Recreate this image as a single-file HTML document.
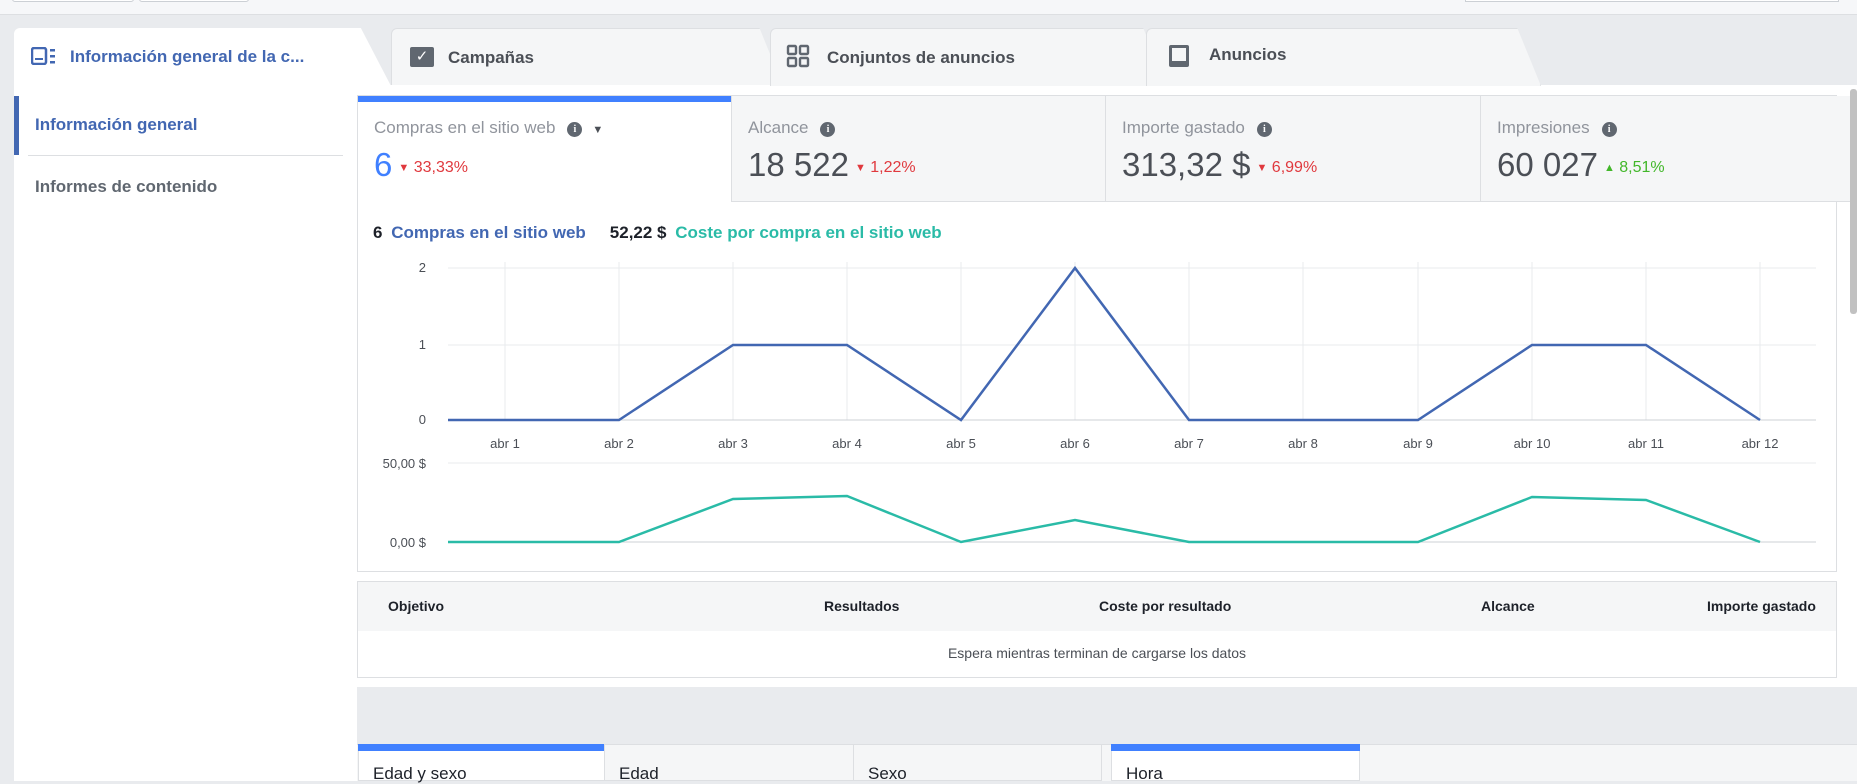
<!DOCTYPE html>
<html><head><meta charset="utf-8"><style>
*{margin:0;padding:0;box-sizing:border-box}
body{width:1857px;height:781px;overflow:hidden;background:#e9ebee;font-family:"Liberation Sans",Arial,sans-serif;position:relative;color:#4b4f56}
.a{position:absolute}
.tab{position:absolute;top:28px;height:58px;background:#f5f6f7;border:1px solid #dddfe2;border-bottom:none;border-radius:6px 6px 0 0;font-size:17px;font-weight:bold;color:#4b4f56;display:flex;align-items:center}
.card{position:absolute;top:96px;height:106px;background:#f5f6f7;border-left:1px solid #dddfe2;border-bottom:1px solid #dddfe2}
.lbl{position:absolute;left:16px;top:22px;font-size:17px;color:#90949c}
.val{position:absolute;left:16px;top:50px;font-size:33px;color:#4b4f56;white-space:nowrap}
.val small{font-size:16px;color:#e0393e;margin-left:6px;vertical-align:4px}
.val small.g{color:#42b72a}
.tri{font-size:11px;vertical-align:1px}
.info{display:inline-block;width:15px;height:15px;border-radius:50%;background:#606770;color:#fff;font-size:10px;font-weight:bold;text-align:center;line-height:15px;margin-left:12px;vertical-align:1px;font-family:"Liberation Serif",serif}
.th{position:absolute;top:598px;font-size:14px;font-weight:bold;color:#1d2129}
.bt{position:absolute;top:744px;height:37px;background:#f5f6f7;border:1px solid #dddfe2;font-size:17px;color:#1d2129;padding:19px 0 0 14px}
</style></head><body>
<div class="a" style="left:0;top:0;width:1857px;height:15px;background:#f6f7f9;border-bottom:1px solid #dddfe2"></div>
<div class="a" style="left:12px;top:-4px;width:122px;height:6px;border:1px solid #ccd0d5;background:#fff;border-radius:3px"></div>
<div class="a" style="left:139px;top:-4px;width:110px;height:6px;border:1px solid #ccd0d5;background:#fff;border-radius:3px"></div>
<div class="a" style="left:1465px;top:-4px;width:374px;height:6px;border:1px solid #ccd0d5;background:#fff"></div>

<div class="tab" style="left:391px;width:392px;padding-left:56px;clip-path:polygon(0 0,94% 0,100% 100%,0 100%)">Campañas</div>
<div class="a" style="left:410px;top:47px;width:24px;height:20px;background:#606770;border-radius:2px;color:#fff;font-size:15px;text-align:center;line-height:20px">✓</div>
<div class="tab" style="left:770px;width:397px;padding-left:56px;clip-path:polygon(0 0,94% 0,100% 100%,0 100%);z-index:1">Conjuntos de anuncios</div>
<svg class="a" style="left:786px;top:44px;z-index:2" width="24" height="24"><g fill="none" stroke="#606770" stroke-width="2.4"><rect x="2" y="2" width="8" height="8" rx="1"/><rect x="14" y="2" width="8" height="8" rx="1"/><rect x="2" y="14" width="8" height="8" rx="1"/><rect x="14" y="14" width="8" height="8" rx="1"/></g></svg>
<div class="tab" style="left:1146px;width:395px;padding-left:62px;padding-bottom:6px;clip-path:polygon(0 0,94% 0,100% 100%,0 100%);z-index:3">Anuncios</div>
<svg class="a" style="left:1168px;top:44px;z-index:4" width="22" height="24"><rect x="1" y="1" width="20" height="22" rx="2" fill="#606770"/><rect x="4" y="4" width="14" height="13" fill="#f5f6f7"/></svg>
<div class="tab" style="left:14px;width:377px;background:#fff;padding-left:56px;color:#4267b2;z-index:5;border:none;clip-path:polygon(0 0,92% 0,100% 100%,0 100%)">Información general de la c...</div>
<svg class="a" style="left:31px;top:47px;z-index:6" width="26" height="18"><rect x="1" y="1" width="14" height="16" rx="2" fill="none" stroke="#4267b2" stroke-width="2.5"/><rect x="4" y="11" width="8" height="2" fill="#4267b2"/><rect x="19" y="2" width="5" height="2.5" fill="#4267b2"/><rect x="19" y="8" width="5" height="2.5" fill="#4267b2"/><rect x="19" y="14" width="5" height="2.5" fill="#4267b2"/></svg>

<div class="a" style="left:14px;top:85px;width:1843px;height:696px;background:#fff"></div>
<div class="a" style="left:14px;top:96px;width:5px;height:59px;background:#4267b2"></div>
<div class="a" style="left:35px;top:115px;font-size:17px;font-weight:bold;color:#4267b2">Información general</div>
<div class="a" style="left:28px;top:155px;width:315px;height:1px;background:#dddfe2"></div>
<div class="a" style="left:35px;top:177px;font-size:17px;font-weight:bold;color:#606770">Informes de contenido</div>

<div class="a" style="left:357px;top:95px;width:1480px;height:477px;background:#fff;border:1px solid #dddfe2"></div>
<div class="card" style="left:358px;width:373px;background:#fff;border:none">
<div class="a" style="left:0;top:0;width:373px;height:6px;background:#4080ff"></div>
<div class="lbl">Compras en el sitio web<span class="info">i</span><span style="font-size:11px;color:#4b4f56;margin-left:10px">▼</span></div>
<div class="val" style="color:#4080ff">6<small><span class="tri">▼</span> 33,33%</small></div></div>
<div class="card" style="left:731px;width:374px"><div class="lbl">Alcance<span class="info">i</span></div><div class="val">18 522<small><span class="tri">▼</span> 1,22%</small></div></div>
<div class="card" style="left:1105px;width:375px"><div class="lbl">Importe gastado<span class="info">i</span></div><div class="val">313,32 $<small><span class="tri">▼</span> 6,99%</small></div></div>
<div class="card" style="left:1480px;width:371px"><div class="lbl">Impresiones<span class="info">i</span></div><div class="val">60 027<small class="g"><span class="tri">▲</span> 8,51%</small></div></div>
<div class="a" style="left:1850px;top:89px;width:7px;height:225px;background:#c1c1c1;border-radius:3px"></div>

<div class="a" style="left:373px;top:223px;font-size:17px;font-weight:bold;color:#1d2129;white-space:nowrap">6 <span style="color:#4267b2;margin-left:4px">Compras en el sitio web</span><span style="margin-left:24px">52,22 $</span> <span style="color:#2abba7;margin-left:4px">Coste por compra en el sitio web</span></div>

<svg class="a" style="left:0;top:0" width="1857" height="781">
<g stroke="#e9ebee" stroke-width="1">
<line x1="448" y1="268" x2="1816" y2="268"/><line x1="448" y1="345" x2="1816" y2="345"/>
<line x1="448" y1="463" x2="1816" y2="463"/><line x1="448" y1="542" x2="1816" y2="542"/>
<g id="v"><line x1="505" y1="262" x2="505" y2="420"/><line x1="619" y1="262" x2="619" y2="420"/><line x1="733" y1="262" x2="733" y2="420"/><line x1="847" y1="262" x2="847" y2="420"/><line x1="961" y1="262" x2="961" y2="420"/><line x1="1075" y1="262" x2="1075" y2="420"/><line x1="1189" y1="262" x2="1189" y2="420"/><line x1="1303" y1="262" x2="1303" y2="420"/><line x1="1418" y1="262" x2="1418" y2="420"/><line x1="1532" y1="262" x2="1532" y2="420"/><line x1="1646" y1="262" x2="1646" y2="420"/><line x1="1760" y1="262" x2="1760" y2="420"/></g>
<use href="#v" transform="translate(0,201) scale(1,0.5)"/>
</g>
<line x1="448" y1="420" x2="1816" y2="420" stroke="#ccd0d5"/>
<line x1="448" y1="542" x2="1816" y2="542" stroke="#ccd0d5"/>
<polyline fill="none" stroke="#4267b2" stroke-width="2.5" points="448,420 619,420 733,345 847,345 961,420 1075,268 1189,420 1418,420 1532,345 1646,345 1760,420"/>
<polyline fill="none" stroke="#2abba7" stroke-width="2.5" points="448,542 619,542 733,499 847,496 961,542 1075,520 1189,542 1418,542 1532,497 1646,500 1760,542"/>
<g font-family="Liberation Sans,sans-serif" font-size="13" fill="#4b4f56">
<text x="426" y="272" text-anchor="end">2</text><text x="426" y="349" text-anchor="end">1</text><text x="426" y="424" text-anchor="end">0</text>
<text x="426" y="468" text-anchor="end">50,00 $</text><text x="426" y="547" text-anchor="end">0,00 $</text>
<g text-anchor="middle"><text x="505" y="448">abr 1</text><text x="619" y="448">abr 2</text><text x="733" y="448">abr 3</text><text x="847" y="448">abr 4</text><text x="961" y="448">abr 5</text><text x="1075" y="448">abr 6</text><text x="1189" y="448">abr 7</text><text x="1303" y="448">abr 8</text><text x="1418" y="448">abr 9</text><text x="1532" y="448">abr 10</text><text x="1646" y="448">abr 11</text><text x="1760" y="448">abr 12</text></g>
</g></svg>

<div class="a" style="left:357px;top:581px;width:1480px;height:97px;background:#fff;border:1px solid #dddfe2"></div>
<div class="a" style="left:358px;top:582px;width:1478px;height:49px;background:#f5f6f7"></div>
<div class="th" style="left:388px">Objetivo</div>
<div class="th" style="left:824px">Resultados</div>
<div class="th" style="left:1099px">Coste por resultado</div>
<div class="th" style="left:1481px">Alcance</div>
<div class="th" style="left:1707px">Importe gastado</div>
<div class="a" style="left:358px;top:645px;width:1478px;text-align:center;font-size:14px;color:#4b4f56">Espera mientras terminan de cargarse los datos</div>

<div class="a" style="left:357px;top:687px;width:1500px;height:57px;background:#e9ebee"></div>
<div class="a" style="left:357px;top:744px;width:1500px;height:37px;background:#f5f6f7;border-top:1px solid #dddfe2"></div>
<div class="bt" style="left:358px;width:247px;background:#fff">Edad y sexo</div>
<div class="a" style="left:358px;top:744px;width:247px;height:7px;background:#4080ff"></div>
<div class="bt" style="left:604px;width:250px">Edad</div>
<div class="bt" style="left:853px;width:249px">Sexo</div>
<div class="bt" style="left:1111px;width:249px;background:#fff">Hora</div>
<div class="a" style="left:1111px;top:744px;width:249px;height:7px;background:#4080ff"></div>
</body></html>
